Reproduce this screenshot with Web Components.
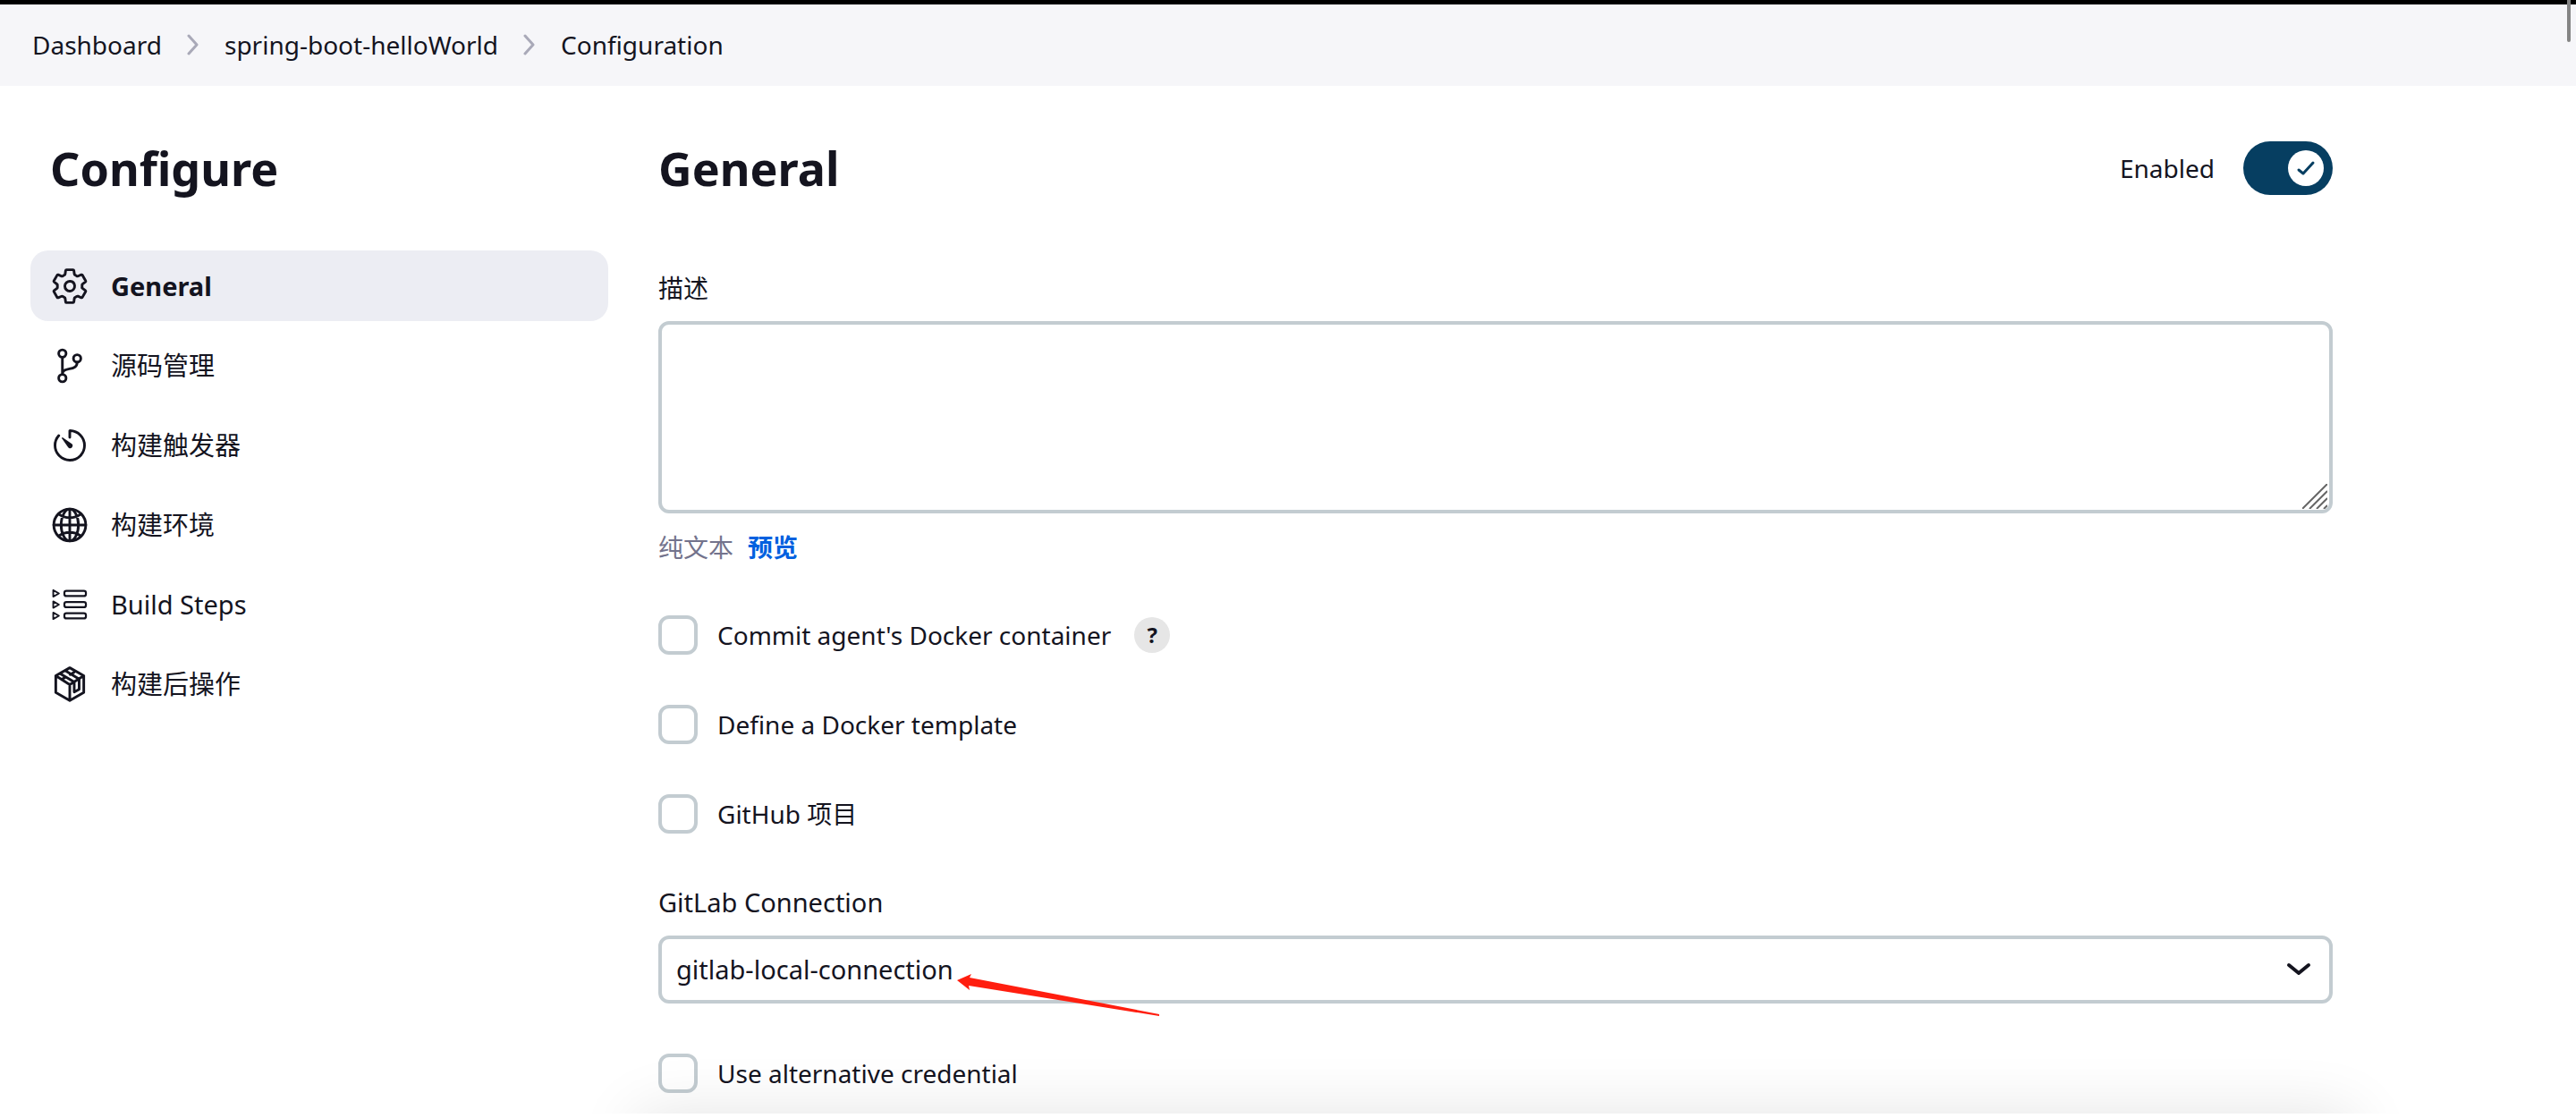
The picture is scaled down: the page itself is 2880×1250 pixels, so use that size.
<!DOCTYPE html>
<html lang="zh-CN">
<head>
<meta charset="utf-8">
<title>spring-boot-helloWorld Configuration</title>
<style>
:root {
  --ink: #14141f;
  --line: #c3ccd1;
}
body {
  margin: 0;
  background: #fff;
  color: var(--ink);
  font: 28px/40px "Noto Sans", "Noto Sans CJK SC", sans-serif;
}
</style>
</head>
<body>
<config-page></config-page>
<script>
const define = (name, html, setup) => {
  const template = document.createElement('template');
  template.innerHTML = html;
  customElements.define(name, class extends HTMLElement {
    constructor() {
      super();
      this.attachShadow({ mode: 'open' }).append(template.content.cloneNode(true));
    }
    connectedCallback() { if (setup) setup(this, this.shadowRoot); }
  });
};

const icons = {
  gear: '<path d="M262.29 192.31a64 64 0 1057.4 57.4 64.13 64.13 0 00-57.4-57.4zM416.39 256a154.34 154.34 0 01-1.53 20.79l45.21 35.46a10.81 10.81 0 012.45 13.75l-42.77 74a10.81 10.81 0 01-13.14 4.59l-44.9-18.08a16.11 16.11 0 00-15.17 1.75A164.48 164.48 0 01325 400.8a15.94 15.94 0 00-8.82 12.14l-6.73 47.89a11.08 11.08 0 01-10.68 9.17h-85.54a11.11 11.11 0 01-10.69-8.87l-6.72-47.82a16.07 16.07 0 00-9-12.22 155.3 155.3 0 01-21.46-12.57 16 16 0 00-15.11-1.71l-44.89 18.07a10.81 10.81 0 01-13.14-4.58l-42.77-74a10.8 10.8 0 012.45-13.75l38.21-30a16.05 16.05 0 006-14.08c-.36-4.17-.58-8.33-.58-12.5s.21-8.27.58-12.35a16 16 0 00-6.07-13.94l-38.19-30A10.81 10.81 0 0149.48 186l42.77-74a10.81 10.81 0 0113.14-4.59l44.9 18.08a16.11 16.11 0 0015.17-1.75A164.48 164.48 0 01187 111.2a15.94 15.94 0 008.82-12.14l6.73-47.89A11.08 11.08 0 01213.23 42h85.54a11.11 11.11 0 0110.69 8.87l6.72 47.82a16.07 16.07 0 009 12.22 155.3 155.3 0 0121.46 12.57 16 16 0 0015.11 1.71l44.89-18.07a10.81 10.81 0 0113.14 4.58l42.77 74a10.8 10.8 0 01-2.45 13.75l-38.21 30a16.05 16.05 0 00-6.05 14.08c.33 4.14.55 8.3.55 12.47z"/>',
  branch: '<circle cx="160" cy="96" r="48"/><circle cx="160" cy="416" r="48"/><circle cx="352" cy="160" r="48"/><path d="M160 368V144M352 208c0 128-192 48-192 160"/>',
  timer: '<path d="M112.91 128A191.85 191.85 0 0064 254c-1.18 106.35 85.65 193.8 192 194 106.2.2 192-85.83 192-192 0-104.54-83.55-189.61-187.5-192a4.36 4.36 0 00-4.5 4.37V152"/><path fill="currentColor" stroke="none" d="M233.38 278.63l-79-113a8.13 8.13 0 0111.32-11.32l113 79a32.5 32.5 0 01-37.25 53.26 33.21 33.21 0 01-8.07-7.94z"/>',
  globe: '<circle cx="256" cy="256" r="208"/><path d="M256 48c-58.07 0-112.67 93.13-112.67 208S197.93 464 256 464s112.67-93.13 112.67-208S314.07 48 256 48zM117.33 117.33c38.24 27.15 86.38 43.34 138.67 43.34s100.43-16.19 138.67-43.34M394.67 394.67c-38.24-27.15-86.38-43.34-138.67-43.34s-100.43 16.19-138.67 43.34M256 48v416M464 256H48"/>',
  steps: '<g stroke-width="26"><rect x="186" y="76" width="280" height="68" rx="26"/><rect x="186" y="222" width="280" height="68" rx="26"/><rect x="186" y="368" width="280" height="68" rx="26"/></g><path stroke-width="22" d="M41 68v84l74-42zM41 214v84l74-42zM41 360v84l74-42z"/>',
  cube: '<path d="M256 42L438 146V364L256 468L74 364V146ZM74 146L256 262L438 146M256 262V468M132 118L314 228V358L378 322V188L196 78M150 196L198 166M262 130L310 102"/>'
};

define('app-icon', `
<style>
:host { display: block; width: 44px; height: 44px; flex: none; }
svg { display: block; width: 100%; height: 100%; }
</style>
<svg viewBox="0 0 512 512" fill="none" stroke="currentColor" stroke-width="34" stroke-linecap="round" stroke-linejoin="round" aria-hidden="true"></svg>`,
(el, root) => { root.querySelector('svg').innerHTML = icons[el.getAttribute('name')]; });

define('crumb-bar', `
<style>
:host { display: block; background: #f6f6f9; border-top: 5px solid #000; }
nav { display: flex; align-items: center; gap: 28px; padding: 25px 36px 26px; }
a { color: inherit; text-decoration: none; }
svg { width: 14px; height: 24px; fill: none; stroke: #a9a9b8; stroke-width: 3; stroke-linecap: round; stroke-linejoin: round; }
</style>
<nav aria-label="Breadcrumb">
  <a href="#dashboard">Dashboard</a>
  <svg viewBox="0 0 14 24"><path d="M2 2l9 10-9 10"/></svg>
  <a href="#job">spring-boot-helloWorld</a>
  <svg viewBox="0 0 14 24"><path d="M2 2l9 10-9 10"/></svg>
  <a href="#configuration">Configuration</a>
</nav>`);

define('side-link', `
<style>
:host { display: block; }
a { display: flex; align-items: center; gap: 24px; padding: 18px 22px 17px; min-height: 44px; border-radius: 20px; color: inherit; font-size: 29px; text-decoration: none; }
:host([current]) a { background: #ecedf3; font-weight: 700; }
</style>
<a href="#section"><app-icon></app-icon><span><slot></slot></span></a>`,
(el, root) => {
  const icon = document.createElement('app-icon');
  icon.setAttribute('name', el.getAttribute('icon'));
  root.querySelector('app-icon').replaceWith(icon);
});

define('side-nav', `
<style>
:host { display: block; width: 646px; flex: none; }
h1 { margin: 0 0 56px; padding-left: 22px; font-size: 52px; line-height: 72px; font-weight: 700; }
nav { display: flex; flex-direction: column; gap: 10px; }
</style>
<h1>Configure</h1>
<nav aria-label="Configure">
  <side-link icon="gear" current>General</side-link>
  <side-link icon="branch">源码管理</side-link>
  <side-link icon="timer">构建触发器</side-link>
  <side-link icon="globe">构建环境</side-link>
  <side-link icon="steps">Build Steps</side-link>
  <side-link icon="cube">构建后操作</side-link>
</nav>`);

define('toggle-switch', `
<style>
:host { display: block; }
label { display: flex; align-items: center; gap: 32px; }
.track { display: grid; width: 100px; height: 60px; }
input { grid-area: 1 / 1; appearance: none; margin: 0; border-radius: 30px; background: #063e61; }
.knob { grid-area: 1 / 1; justify-self: end; align-self: center; width: 40px; height: 40px; margin-right: 10px; border-radius: 50%; background: #fff; pointer-events: none; }
svg { display: block; width: 40px; height: 40px; fill: none; stroke: #063e61; stroke-width: 3; stroke-linecap: round; stroke-linejoin: round; }
</style>
<label><slot></slot>
  <span class="track">
    <input type="checkbox" role="switch" checked>
    <span class="knob"><svg viewBox="0 0 40 40"><path d="M12 22L17 26L28 14"/></svg></span>
  </span>
</label>`);

define('check-row', `
<style>
:host { display: flex; align-items: center; gap: 26px; height: 44px; }
label { display: flex; align-items: center; gap: 22px; }
input { appearance: none; box-sizing: border-box; width: 44px; height: 44px; margin: 0; border: 4px solid var(--line); border-radius: 12px; }
</style>
<label><input type="checkbox"><span><slot></slot></span></label><slot name="help"></slot>`);

define('help-button', `
<style>
:host { display: block; }
button { display: block; width: 40px; height: 40px; padding: 0; border: 0; border-radius: 50%; background: #e6e6e6; color: inherit; font: inherit; font-size: 24px; font-weight: 700; line-height: 40px; text-align: center; }
</style>
<button type="button" aria-label="Help"><slot></slot></button>`);

define('text-area', `
<style>
:host { display: block; }
label { display: block; margin-bottom: 16px; line-height: 42px; }
.box { display: grid; }
textarea { grid-area: 1 / 1; box-sizing: border-box; width: 100%; height: 215px; padding: 16px; border: 4px solid var(--line); border-radius: 12px; resize: none; font: inherit; color: inherit; background: #fff; outline: 0; }
svg { grid-area: 1 / 1; place-self: end; width: 28px; height: 28px; margin: 0 6px 5px 0; fill: none; stroke: #666; stroke-width: 2; pointer-events: none; }
p { display: flex; gap: 16px; margin: 18px 0 0; color: #73738c; }
a { color: #0060df; font-weight: 700; text-decoration: none; }
</style>
<label for="text"><slot></slot></label>
<div class="box">
  <textarea id="text"></textarea>
  <svg viewBox="0 0 28 28"><path d="M0 28L28 0M8 28L28 8M16 28L28 16M24 28L28 24"/></svg>
</div>
<p><span>纯文本</span><a href="#preview">预览</a></p>`);

define('select-field', `
<style>
:host { display: block; font-size: 29px; }
label { display: block; margin-bottom: 16px; line-height: 42px; }
.box { display: grid; }
select { grid-area: 1 / 1; appearance: none; box-sizing: border-box; width: 100%; height: 76px; padding: 0 16px; border: 4px solid var(--line); border-radius: 12px; background: #fff; color: inherit; font: inherit; }
.chevron { grid-area: 1 / 1; justify-self: end; align-self: center; width: 28px; height: 16px; margin-right: 24px; fill: none; stroke: var(--ink); stroke-width: 4; stroke-linecap: round; stroke-linejoin: round; pointer-events: none; }
.arrow { grid-area: 1 / 1; position: relative; pointer-events: none; left: 334px; top: 43px; width: 228px; height: 47px; margin-bottom: -47px; fill: #ff1e0f; }
</style>
<label for="choice"><slot></slot></label>
<div class="box">
  <select id="choice"><option>gitlab-local-connection</option></select>
  <svg class="chevron" viewBox="0 0 28 16"><path d="M3 3l11 9L25 3"/></svg>
  <svg class="arrow" viewBox="0 0 228 47"><path d="M0 7L16 0L14 4L226 45V47L13 13L14 18Z"/></svg>
</div>`);

define('bottom-shade', `
<style>
:host { position: absolute; left: -90px; right: -90px; bottom: 0; height: 90px; overflow: hidden; pointer-events: none; }
div { height: 90px; margin-inline: 66px; transform: translateY(90px); box-shadow: 0 0 70px rgba(0, 0, 0, .11); }
</style>
<div></div>`);

define('general-form', `
<style>
:host { display: block; position: relative; flex: 1; max-width: 1872px; padding-bottom: 23px; }
header { display: flex; align-items: center; justify-content: space-between; margin-bottom: 77px; height: 72px; }
h2 { margin: 0; font-size: 52px; line-height: 72px; font-weight: 700; }
form { display: flex; flex-direction: column; gap: 56px; }
</style>
<header><h2>General</h2><toggle-switch>Enabled</toggle-switch></header>
<form>
  <text-area>描述</text-area>
  <check-row>Commit agent's Docker container<help-button slot="help">?</help-button></check-row>
  <check-row>Define a Docker template</check-row>
  <check-row>GitHub 项目</check-row>
  <select-field>GitLab Connection</select-field>
  <check-row>Use alternative credential</check-row>
</form>
<bottom-shade></bottom-shade>`);

define('scroll-thumb', `
<style>
:host { position: fixed; top: 0; right: 6px; width: 4px; height: 47px; background: #858585; border-radius: 0 0 2px 2px; }
</style>`);

define('config-page', `
<style>
:host { display: block; }
main { display: flex; align-items: flex-start; gap: 56px; padding: 56px 34px 5px; }
</style>
<crumb-bar></crumb-bar>
<main><side-nav></side-nav><general-form></general-form></main>
<scroll-thumb></scroll-thumb>`);
</script>
</body>
</html>
